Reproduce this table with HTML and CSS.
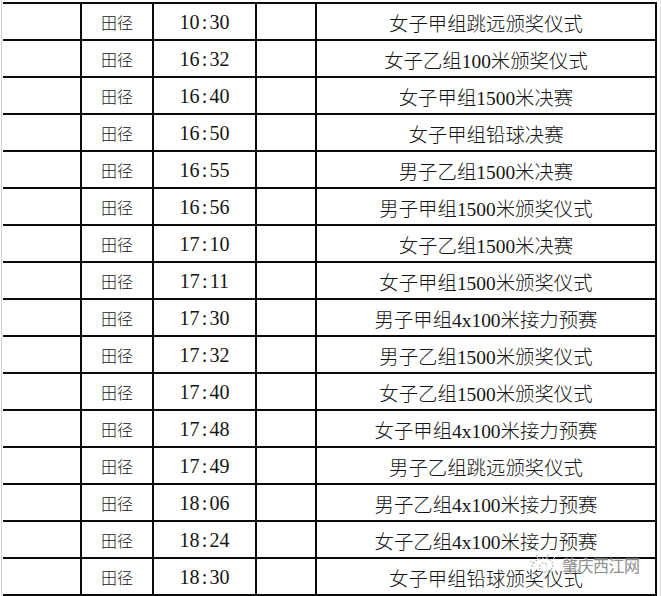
FILE: index.html
```html
<!DOCTYPE html>
<html lang="zh">
<head>
<meta charset="utf-8">
<title>田径赛程</title>
<link rel="stylesheet" href="styles.css">
</head>
<body>
<div class="page">
  <div class="grid">
    <div class="c"></div><div class="c sport">田径</div><div class="c time">10<span class="colon">:</span>30</div><div class="c"></div><div class="c event">女子甲组跳远颁奖仪式</div>
    <div class="c"></div><div class="c sport">田径</div><div class="c time">16<span class="colon">:</span>32</div><div class="c"></div><div class="c event">女子乙组100米颁奖仪式</div>
    <div class="c"></div><div class="c sport">田径</div><div class="c time">16<span class="colon">:</span>40</div><div class="c"></div><div class="c event">女子甲组1500米决赛</div>
    <div class="c"></div><div class="c sport">田径</div><div class="c time">16<span class="colon">:</span>50</div><div class="c"></div><div class="c event">女子甲组铅球决赛</div>
    <div class="c"></div><div class="c sport">田径</div><div class="c time">16<span class="colon">:</span>55</div><div class="c"></div><div class="c event">男子乙组1500米决赛</div>
    <div class="c"></div><div class="c sport">田径</div><div class="c time">16<span class="colon">:</span>56</div><div class="c"></div><div class="c event">男子甲组1500米颁奖仪式</div>
    <div class="c"></div><div class="c sport">田径</div><div class="c time">17<span class="colon">:</span>10</div><div class="c"></div><div class="c event">女子乙组1500米决赛</div>
    <div class="c"></div><div class="c sport">田径</div><div class="c time">17<span class="colon">:</span>11</div><div class="c"></div><div class="c event">女子甲组1500米颁奖仪式</div>
    <div class="c"></div><div class="c sport">田径</div><div class="c time">17<span class="colon">:</span>30</div><div class="c"></div><div class="c event">男子甲组4x100米接力预赛</div>
    <div class="c"></div><div class="c sport">田径</div><div class="c time">17<span class="colon">:</span>32</div><div class="c"></div><div class="c event">男子乙组1500米颁奖仪式</div>
    <div class="c"></div><div class="c sport">田径</div><div class="c time">17<span class="colon">:</span>40</div><div class="c"></div><div class="c event">女子乙组1500米颁奖仪式</div>
    <div class="c"></div><div class="c sport">田径</div><div class="c time">17<span class="colon">:</span>48</div><div class="c"></div><div class="c event">女子甲组4x100米接力预赛</div>
    <div class="c"></div><div class="c sport">田径</div><div class="c time">17<span class="colon">:</span>49</div><div class="c"></div><div class="c event">男子乙组跳远颁奖仪式</div>
    <div class="c"></div><div class="c sport">田径</div><div class="c time">18<span class="colon">:</span>06</div><div class="c"></div><div class="c event">男子乙组4x100米接力预赛</div>
    <div class="c"></div><div class="c sport">田径</div><div class="c time">18<span class="colon">:</span>24</div><div class="c"></div><div class="c event">女子乙组4x100米接力预赛</div>
    <div class="c"></div><div class="c sport">田径</div><div class="c time">18<span class="colon">:</span>30</div><div class="c"></div><div class="c event">女子甲组铅球颁奖仪式</div>
  </div>
  <div class="watermark">
    <svg class="wm-logo" width="30" height="24" viewBox="0 0 30 24">
      <path d="M4 14 C6 6 16 3 22 7 C27 10 25 18 18 19 C12 20 9 15 13 11 C16 8 20 11 18 14" fill="none" stroke="#b5b5b5" stroke-width="1.2" stroke-dasharray="2 1.5"/>
      <path d="M2 8 L6 10 M8 2 L10 6 M20 1 L19 5 M27 4 L24 7" stroke="#c5c5c5" stroke-width="1"/>
    </svg>
    <span class="wm-text">肇庆西江网</span>
  </div>
</div>
</body>
</html>
```
FILE: styles.css
```css
html, body {
  margin: 0;
  padding: 0;
  background: #ffffff;
}
.page {
  position: relative;
  margin-left: 1px;
  width: 658px;
  height: 596px;
  border-left: 1px solid #cfcfcf;
  border-right: 1px solid #dcdcdc;
  box-sizing: content-box;
  overflow: hidden;
}
.grid {
  display: grid;
  grid-template-columns: 77px 70px 101px 58px 338px;
  grid-auto-rows: 35px;
  gap: 2px;
  background: #0a0a0a;
  margin: 2px 0 0 1px;
  padding: 2px 2px 2px 0;
  width: max-content;
}
.c {
  background: #ffffff;
  display: flex;
  align-items: center;
  justify-content: center;
  color: #141414;
  font-family: "Liberation Serif", "Noto Sans CJK SC", serif;
  font-weight: 300;
  white-space: nowrap;
}
.sport {
  font-size: 16px;
  font-family: "Noto Sans CJK SC", sans-serif;
  font-weight: 300;
  padding-top: 1px;
}
.time {
  font-size: 20px;
  padding-top: 2px;
}
.colon {
  display: inline-block;
  width: 10px;
  text-align: center;
}
.event {
  font-size: 19.4px;
  padding-top: 1px;
}
.watermark {
  position: absolute;
  left: 526px;
  top: 553px;
  display: flex;
  align-items: center;
  gap: 4px;
}
.wm-text {
  font-family: "Noto Sans CJK SC", sans-serif;
  font-size: 16px;
  color: #8e8e8e;
  letter-spacing: -0.5px;
  text-shadow: 0 0 2px #ffffff, 0 0 2px #ffffff;
}
```
